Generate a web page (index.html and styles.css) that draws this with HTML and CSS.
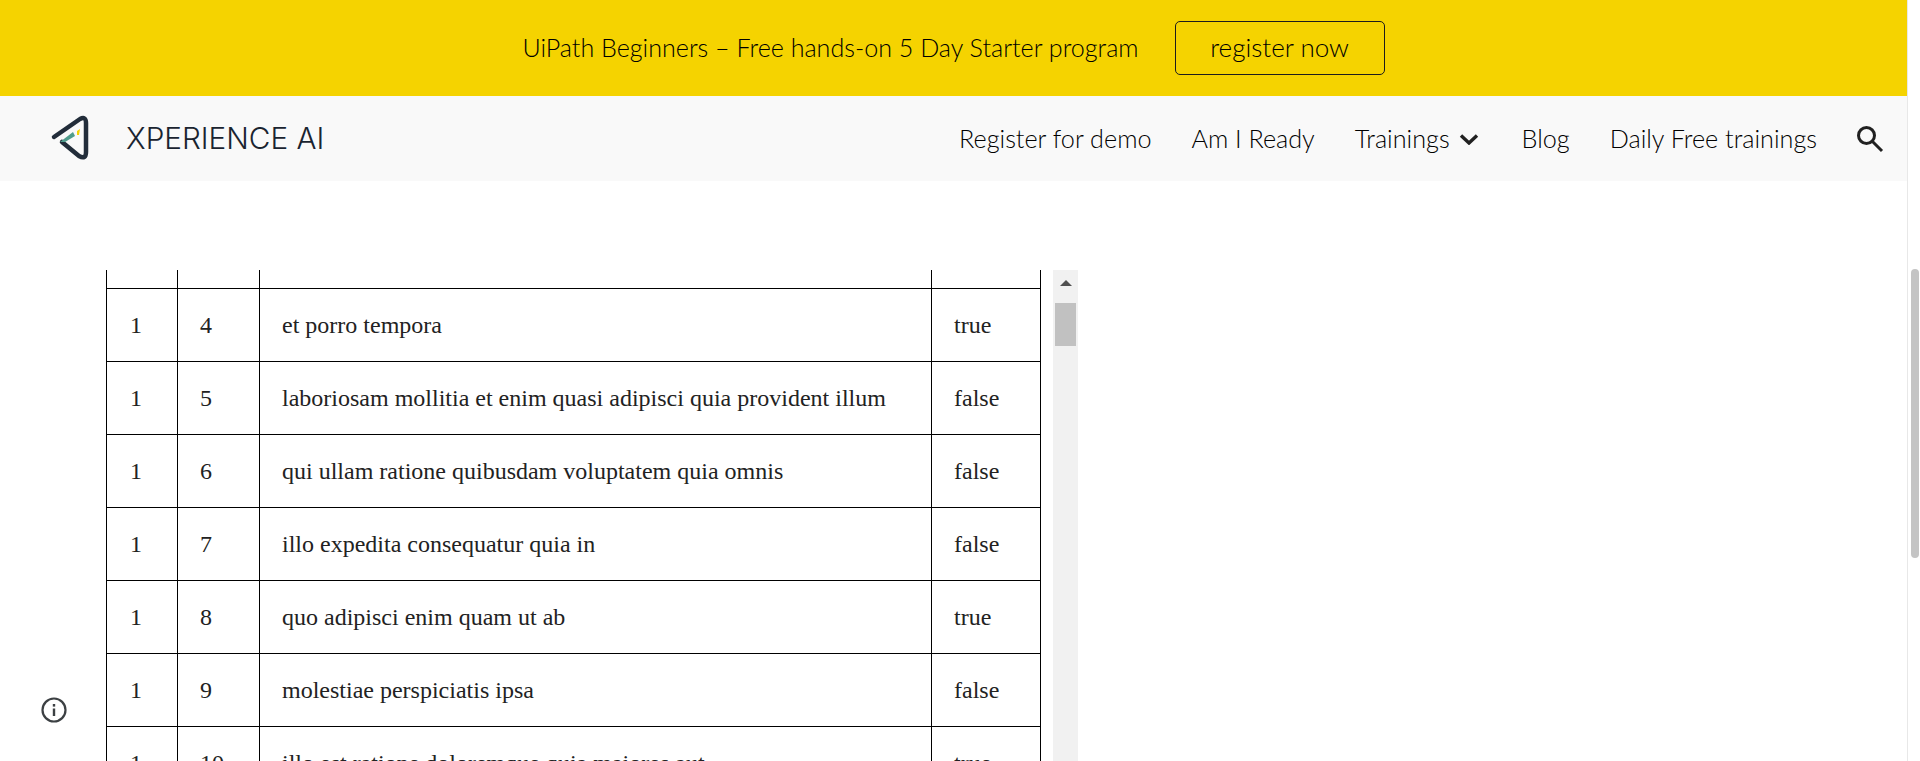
FILE: index.html
```html
<!DOCTYPE html>
<html lang="en">
<head>
    <meta charset="UTF-8">
    <meta name="viewport" content="width=device-width, initial-scale=1.0">
    <title>XPERIENCE AI</title>
    <link rel="stylesheet" href="styles.css">
</head>
<body>
    <div class="page">
        <div class="banner">
            <span class="banner-text">UiPath Beginners – Free hands-on 5 Day Starter program</span>
            <a class="banner-btn">register now</a>
        </div>

        <header class="nav">
            <svg class="logo" width="44" height="48" viewBox="0 0 44 48">
                <path d="M6 23 L32 5 Q38 2 38 9 L38 38 Q38 46 31 42 L14 28" fill="none" stroke="#222d3a" stroke-width="4.5" stroke-linecap="round" stroke-linejoin="round"/>
                <path d="M12 28 L25 18 L27 22 L17 28 Z" fill="#4f9c8c"/>
                <path d="M29 17 L32 15 L31 21 L29 21 Z" fill="#f5d300"/>
            </svg>
            <span class="brand">XPERIENCE AI</span>
            <nav class="nav-links">
                <a>Register for demo</a>
                <a>Am I Ready</a>
                <a class="has-menu">Trainings
                    <svg width="20" height="12" viewBox="0 0 20 12"><path d="M2 2.5 L10 10 L18 2.5" fill="none" stroke="#212121" stroke-width="3.4"/></svg>
                </a>
                <a>Blog</a>
                <a>Daily Free trainings</a>
            </nav>
            <svg class="search" width="30" height="30" viewBox="0 0 30 30">
                <circle cx="11.5" cy="11.5" r="8" fill="none" stroke="#212121" stroke-width="3"/>
                <path d="M17.5 17.5 L27 27" stroke="#212121" stroke-width="3"/>
            </svg>
        </header>

        <main class="content">
            <div class="frame">
                <div class="frame-view">
                    <table class="todos">
                        <tr class="cut-row"><td></td><td></td><td></td><td></td></tr>
                        <tr><td>1</td><td>4</td><td>et porro tempora</td><td>true</td></tr>
                        <tr><td>1</td><td>5</td><td>laboriosam mollitia et enim quasi adipisci quia provident illum</td><td>false</td></tr>
                        <tr><td>1</td><td>6</td><td>qui ullam ratione quibusdam voluptatem quia omnis</td><td>false</td></tr>
                        <tr><td>1</td><td>7</td><td>illo expedita consequatur quia in</td><td>false</td></tr>
                        <tr><td>1</td><td>8</td><td>quo adipisci enim quam ut ab</td><td>true</td></tr>
                        <tr><td>1</td><td>9</td><td>molestiae perspiciatis ipsa</td><td>false</td></tr>
                        <tr><td>1</td><td>10</td><td>illo est ratione doloremque quia maiores aut</td><td>true</td></tr>
                    </table>
                </div>
                <div class="frame-scroll">
                    <div class="frame-arrow"></div>
                    <div class="frame-thumb"></div>
                </div>
            </div>
        </main>
    </div>

    <div class="page-scroll">
        <div class="page-thumb"></div>
    </div>

    <svg class="info" width="28" height="28" viewBox="0 0 28 28">
        <circle cx="14" cy="14" r="11.5" fill="none" stroke="#3c4043" stroke-width="2.2"/>
        <rect x="12.8" y="12.5" width="2.4" height="7.5" fill="#3c4043"/>
        <rect x="12.8" y="8" width="2.4" height="2.6" fill="#3c4043"/>
    </svg>
</body>
</html>
```

FILE: styles.css
```css
html, body {
    height: 100%;
}
body {
    margin: 0;
    display: flex;
    overflow: hidden;
    background-color: white;
    font-family: "Lato", "Noto Sans", sans-serif;
    font-weight: 300;
    color: #000;
}
.page {
    flex: 1;
    min-width: 0;
}
.banner {
    height: 96px;
    background-color: #f5d300;
    display: flex;
    align-items: center;
    justify-content: center;
    font-size: 25.1px;
    color: #000;
}
.banner-text {
    padding-bottom: 2px;
}
.banner-btn {
    margin-left: 36px;
    width: 210px;
    height: 54px;
    box-sizing: border-box;
    padding-bottom: 2px;
    border: 1px solid #1c1c1c;
    border-radius: 5px;
    display: flex;
    align-items: center;
    justify-content: center;
    font-size: 26px;
}
.nav {
    height: 85px;
    background-color: #f9f9f9;
    display: flex;
    align-items: center;
    padding-left: 48px;
}
.logo {
    margin-top: -2px;
}
.brand {
    margin-left: 34px;
    margin-bottom: 2px;
    font-family: "Inter", sans-serif;
    font-weight: 300;
    font-size: 29.7px;
    color: #1a2430;
}
.nav-links {
    margin-left: auto;
    display: flex;
    align-items: center;
    gap: 40px;
    font-size: 25.2px;
}
.nav-links a {
    padding-bottom: 2px;
}
.has-menu {
    display: flex;
    align-items: center;
    gap: 9px;
    margin-right: 3px;
}
.has-menu svg {
    margin-top: 3px;
}
.search {
    margin-left: 38px;
    margin-right: 22px;
}
.content {
    padding: 89px 0 0 106px;
}
.frame {
    display: flex;
    height: 491px;
    overflow: hidden;
}
.frame-view {
    width: 947px;
    overflow: hidden;
}
.todos {
    border-collapse: collapse;
    table-layout: fixed;
    width: 935px;
    font-family: "Liberation Serif", serif;
    font-size: 24px;
    font-weight: 400;
    color: #222;
}
.todos td {
    height: 73px;
    padding: 1px 0 0 22px;
    box-sizing: border-box;
    border: 1px solid black;
}
.todos .cut-row td {
    height: 18px;
    border-top: none;
}
.todos td:nth-child(1) {
    width: 71px;
    padding-left: 23px;
}
.todos td:nth-child(2) {
    width: 82px;
}
.todos td:nth-child(3) {
    width: 672px;
}
.frame-scroll {
    width: 25px;
    background-color: #f1f1f1;
    display: flex;
    flex-direction: column;
    align-items: center;
}
.frame-arrow {
    margin-top: 10px;
    width: 0;
    height: 0;
    border-left: 6px solid transparent;
    border-right: 6px solid transparent;
    border-bottom: 6px solid #505050;
}
.frame-thumb {
    margin-top: 17px;
    width: 21px;
    height: 43px;
    background-color: #c1c1c1;
}
.page-scroll {
    width: 13px;
    flex-shrink: 0;
    background-color: white;
    border-left: 1px solid #e8e8e8;
    box-sizing: border-box;
}
.page-thumb {
    margin: 269px 0 0 3px;
    width: 8px;
    height: 289px;
    border-radius: 4px;
    background-color: #c4c4c4;
}
.info {
    position: fixed;
    left: 40px;
    top: 696px;
}
```
